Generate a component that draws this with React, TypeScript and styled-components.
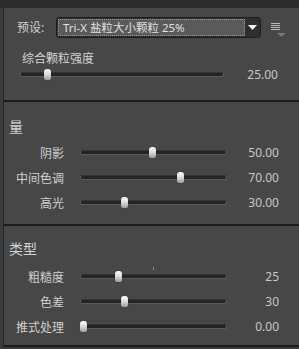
import React from "react";
import styled, { createGlobalStyle } from "styled-components";

const Global = createGlobalStyle`
  html, body { margin: 0; padding: 0; background: #2b2b2b; }
  * { box-sizing: border-box; }
`;

const FONT = `"Noto Sans", "Noto Sans CJK SC", sans-serif`;

const Frame = styled.div`
  width: 299px;
  height: 349px;
  background: #2b2b2b;
  padding-top: 8px;
  font-family: ${FONT};
  overflow: hidden;
`;

const Body = styled.div`
  display: flex;
  height: 341px;
  background: #3c3c3c;
  padding-left: 3px;
`;

const Panel = styled.div`
  flex: 1;
  display: flex;
  flex-direction: column;
  background: #474747;
  border-left: 1px solid #262626;
  border-bottom: 2px solid #1e1e1e;
  height: 339px;
`;

const Section = styled.div<{ $pt: number; $h: number }>`
  display: flex;
  flex-direction: column;
  height: ${(p) => p.$h}px;
  padding-top: ${(p) => p.$pt}px;
`;

const Divider = styled.div`
  height: 2px;
  background: #1c1c1c;
  flex-shrink: 0;
`;

const PresetRow = styled.div`
  display: flex;
  align-items: center;
  height: 21px;
  padding-left: 13px;
`;

const PresetLabel = styled.span`
  width: 39px;
  color: #d2d2d2;
  font-size: 12px;
  line-height: 21px;
`;

const Select = styled.div`
  display: flex;
  width: 205px;
  height: 21px;
  border: 1px solid #1e1e1e;
  border-radius: 3px;
  background: #2e2e2e;
  overflow: hidden;
`;

const SelectText = styled.div`
  flex: 1;
  margin: 1px 0 1px 1px;
  border: 1px dotted #9a9a9a;
  background: #5a5a5a;
  color: #e0e0e0;
  font-size: 11.5px;
  line-height: 15px;
  padding-left: 4px;
  white-space: nowrap;
`;

const SelectArrow = styled.div`
  width: 15px;
  display: flex;
  align-items: center;
  justify-content: center;
`;

const MenuBtn = styled.div`
  width: 18px;
  height: 21px;
  margin-left: 10px;
  display: flex;
`;

const SectionLabel = styled.div<{ $pl: number; $size: number; $h: number; $mt?: number }>`
  color: #d4d4d4;
  font-size: ${(p) => p.$size}px;
  height: ${(p) => p.$h}px;
  line-height: ${(p) => p.$h}px;
  padding-left: ${(p) => p.$pl}px;
  margin-top: ${(p) => p.$mt ?? 0}px;
`;

const Spacer = styled.div<{ $h: number }>`
  height: ${(p) => p.$h}px;
  flex-shrink: 0;
`;

const SliderRow = styled.div<{ $h: number }>`
  display: flex;
  align-items: center;
  height: ${(p) => p.$h}px;
`;

const RowLabel = styled.div`
  width: 60px;
  text-align: right;
  color: #d0d0d0;
  font-size: 12px;
  white-space: nowrap;
  margin-right: 16px;
`;

const Track = styled.div<{ $w: number; $ml: number }>`
  position: relative;
  width: ${(p) => p.$w}px;
  margin-left: ${(p) => p.$ml}px;
  height: 5px;
  border-radius: 3px;
  background: #242424;
  border: 1px solid #5a5a5a;
  border-top-color: #333;
`;

const Thumb = styled.div`
  position: absolute;
  top: -4px;
  width: 7px;
  height: 11px;
  border-radius: 3px 3px 2px 2px;
  background: linear-gradient(#ffffff, #d8d8d8 50%, #9c9c9c);
  box-shadow: 0 0 1px rgba(0, 0, 0, 0.6);
`;

const Tick = styled.div`
  position: absolute;
  top: -8px;
  width: 1px;
  height: 3px;
  background: #8a8a8a;
`;

const Value = styled.div<{ $w: number }>`
  width: ${(p) => p.$w}px;
  text-align: right;
  color: #c8c8c8;
  font-size: 12px;
`;

type SliderProps = {
  label?: string;
  pct: number;
  value: string;
  trackW: number;
  trackML: number;
  valueW: number;
  h: number;
  tick?: number;
};

function Slider({ label, pct, value, trackW, trackML, valueW, h, tick }: SliderProps) {
  const left = (pct / 100) * (trackW - 9) - 1;
  return (
    <SliderRow $h={h}>
      {label !== undefined && <RowLabel>{label}</RowLabel>}
      <Track $w={trackW} $ml={trackML}>
        {tick !== undefined && <Tick style={{ left: tick }} />}
        <Thumb style={{ left }} />
      </Track>
      <Value $w={valueW}>{value}</Value>
    </SliderRow>
  );
}

const amount = [
  { label: "阴影", pct: 50, value: "50.00" },
  { label: "中间色调", pct: 70, value: "70.00" },
  { label: "高光", pct: 30, value: "30.00" },
];

const types = [
  { label: "粗糙度", pct: 25, value: "25", tick: 72 },
  { label: "色差", pct: 30, value: "30" },
  { label: "推式处理", pct: 0, value: "0.00" },
];

export default function App() {
  return (
    <>
      <Global />
      <Frame>
        <Body>
          <Panel>
            <Section $h={92} $pt={9}>
              <PresetRow>
                <PresetLabel>预设:</PresetLabel>
                <Select>
                  <SelectText>Tri-X 盐粒大小颗粒 25%</SelectText>
                  <SelectArrow>
                    <svg width="9" height="5" viewBox="0 0 9 5">
                      <path d="M0 0 H9 L4.5 5 Z" fill="#f2f2f2" />
                    </svg>
                  </SelectArrow>
                </Select>
                <MenuBtn>
                  <svg width="18" height="21" viewBox="0 0 18 21">
                    <rect x="0" y="6" width="9" height="1" fill="#b8b8b8" />
                    <rect x="0" y="8" width="9" height="1" fill="#b8b8b8" />
                    <rect x="0" y="10" width="9" height="1" fill="#b8b8b8" />
                    <rect x="0" y="12" width="9" height="1" fill="#b8b8b8" />
                    <path d="M6 16 H15 L10.5 20 Z" fill="#7a7a7a" />
                  </svg>
                </MenuBtn>
              </PresetRow>
              <SectionLabel $pl={18} $size={12} $h={16} $mt={13}>
                综合颗粒强度
              </SectionLabel>
              <Slider pct={12.5} value="25.00" trackW={204} trackML={16} valueW={54} h={14} />
            </Section>
            <Divider />
            <Section $h={122} $pt={15}>
              <SectionLabel $pl={5} $size={14} $h={20}>
                量
              </SectionLabel>
              <Spacer $h={3} />
              {amount.map((r) => (
                <Slider key={r.label} {...r} trackW={147} trackML={0} valueW={52} h={25} />
              ))}
            </Section>
            <Divider />
            <Section $h={117} $pt={13}>
              <SectionLabel $pl={5} $size={14} $h={20}>
                类型
              </SectionLabel>
              <Spacer $h={5} />
              {types.map((r) => (
                <Slider key={r.label} {...r} trackW={147} trackML={0} valueW={52} h={25} />
              ))}
            </Section>
          </Panel>
        </Body>
      </Frame>
    </>
  );
}
